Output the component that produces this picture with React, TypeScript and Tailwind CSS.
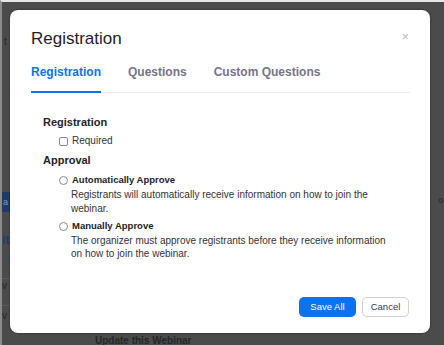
import React from "react";

function Radio() {
  return (
    <span className="inline-block w-[9px] h-[9px] rounded-full border border-[#8a8a92] bg-white shrink-0" />
  );
}

export default function App() {
  return (
    <div className="relative w-[444px] h-[345px] overflow-hidden bg-[#4b4b4b] border-t-2 border-l-2 border-t-[#e6e6e6] border-l-[#8c8c8c] font-['Liberation_Sans',Arial,sans-serif]">
      {/* page behind the overlay */}
      <div className="flex h-full">
        <div className="flex flex-col w-[8px] overflow-hidden text-[#262626]">
          <div className="mt-[34px] h-[12px] text-[10px] leading-[12px] pl-[2px]">t</div>
          <div className="mt-[144px] h-[20px] bg-[#1f3a68] text-[#8a98b8] text-[9px] leading-[20px] pl-[1px]">a</div>
          <div className="mt-[20px] h-[16px] text-[12px] leading-[16px] font-bold text-[#1d3c78]">it</div>
          <div className="mt-[10px] h-[1px] bg-[#2b4b86]" />
          <div className="mt-[19px] h-[1px] bg-[#5a5a5a]" />
          <div className="mt-[2px] h-[10px] text-[10px] leading-[10px]">v</div>
          <div className="mt-[14px] h-[1px] bg-[#5a5a5a]" />
          <div className="mt-[5px] h-[10px] text-[10px] leading-[10px]">v</div>
        </div>
        <div className="flex-1 flex flex-col">
          <div className="mt-auto pl-[85px] h-[10px] overflow-hidden text-[10px] font-bold text-[#262626] leading-[12px]">
            Update this Webinar
          </div>
        </div>
        <div className="w-[8px] flex flex-col text-[#262626]">
          <div className="mt-[192px] h-[12px] text-[9px] leading-[12px] pl-[2px]">o</div>
        </div>
      </div>

      {/* modal */}
      <div className="absolute left-[8px] top-[8px] w-[420px] h-[323px] bg-white rounded-[8px] shadow-[0_0_2px_rgba(0,0,0,0.6)] flex flex-col pl-[21px] pr-[20px] pt-[19px] pb-[16px]">
        <div className="flex items-start justify-between">
          <h2 className="text-[17px] leading-[20px] text-[#232323]">Registration</h2>
          <span className="text-[13px] leading-[14px] mt-[1px] mr-[1px] text-[#b9b9be]">×</span>
        </div>

        <div className="mt-[16px] flex gap-[27px] border-b border-[#ececf0] text-[12px] leading-[15px] font-bold">
          <div className="pb-[11px] border-b-2 border-[#0e72ed] -mb-px text-[#0e72ed]">Registration</div>
          <div className="pb-[12px] text-[#747487]">Questions</div>
          <div className="pb-[12px] text-[#747487]">Custom Questions</div>
        </div>

        <div className="mt-[21px] pl-[12px] flex flex-col text-[#333338]">
          <div className="text-[11px] leading-[16px] font-bold text-[#232323]">Registration</div>
          <div className="mt-[4px] h-[14px] pl-[16px] flex items-center gap-[4px] text-[10px] leading-[14px]">
            <span className="inline-block w-[9px] h-[9px] rounded-[2px] border border-[#8a8a92] bg-white shrink-0" />
            <span>Required</span>
          </div>
          <div className="mt-[4px] text-[11px] leading-[16px] font-bold text-[#232323]">Approval</div>
          <div className="mt-[5px] h-[14px] pl-[16px] flex items-center gap-[4px] text-[9.5px] leading-[14px] font-bold text-[#232323]">
            <Radio />
            <span>Automatically Approve</span>
          </div>
          <div className="mt-[1px] pl-[28px] text-[10px] leading-[14px]">
            Registrants will automatically receive information on how to join the
            <br />
            webinar.
          </div>
          <div className="mt-[3px] h-[14px] pl-[16px] flex items-center gap-[4px] text-[9.5px] leading-[14px] font-bold text-[#232323]">
            <Radio />
            <span>Manually Approve</span>
          </div>
          <div className="mt-[1px] pl-[28px] text-[10px] leading-[13px]">
            The organizer must approve registrants before they receive information
            <br />
            on how to join the webinar.
          </div>
        </div>

        <div className="mt-auto flex justify-end gap-[6px] pr-[1px]">
          <button className="w-[57px] h-[20px] rounded-[5px] bg-[#0e72ed] text-white text-[9.5px] leading-[20px]">
            Save All
          </button>
          <button className="w-[47px] h-[20px] rounded-[5px] bg-white border border-[#cfcfd6] text-[#39394d] text-[9.5px] leading-[18px]">
            Cancel
          </button>
        </div>
      </div>
    </div>
  );
}
